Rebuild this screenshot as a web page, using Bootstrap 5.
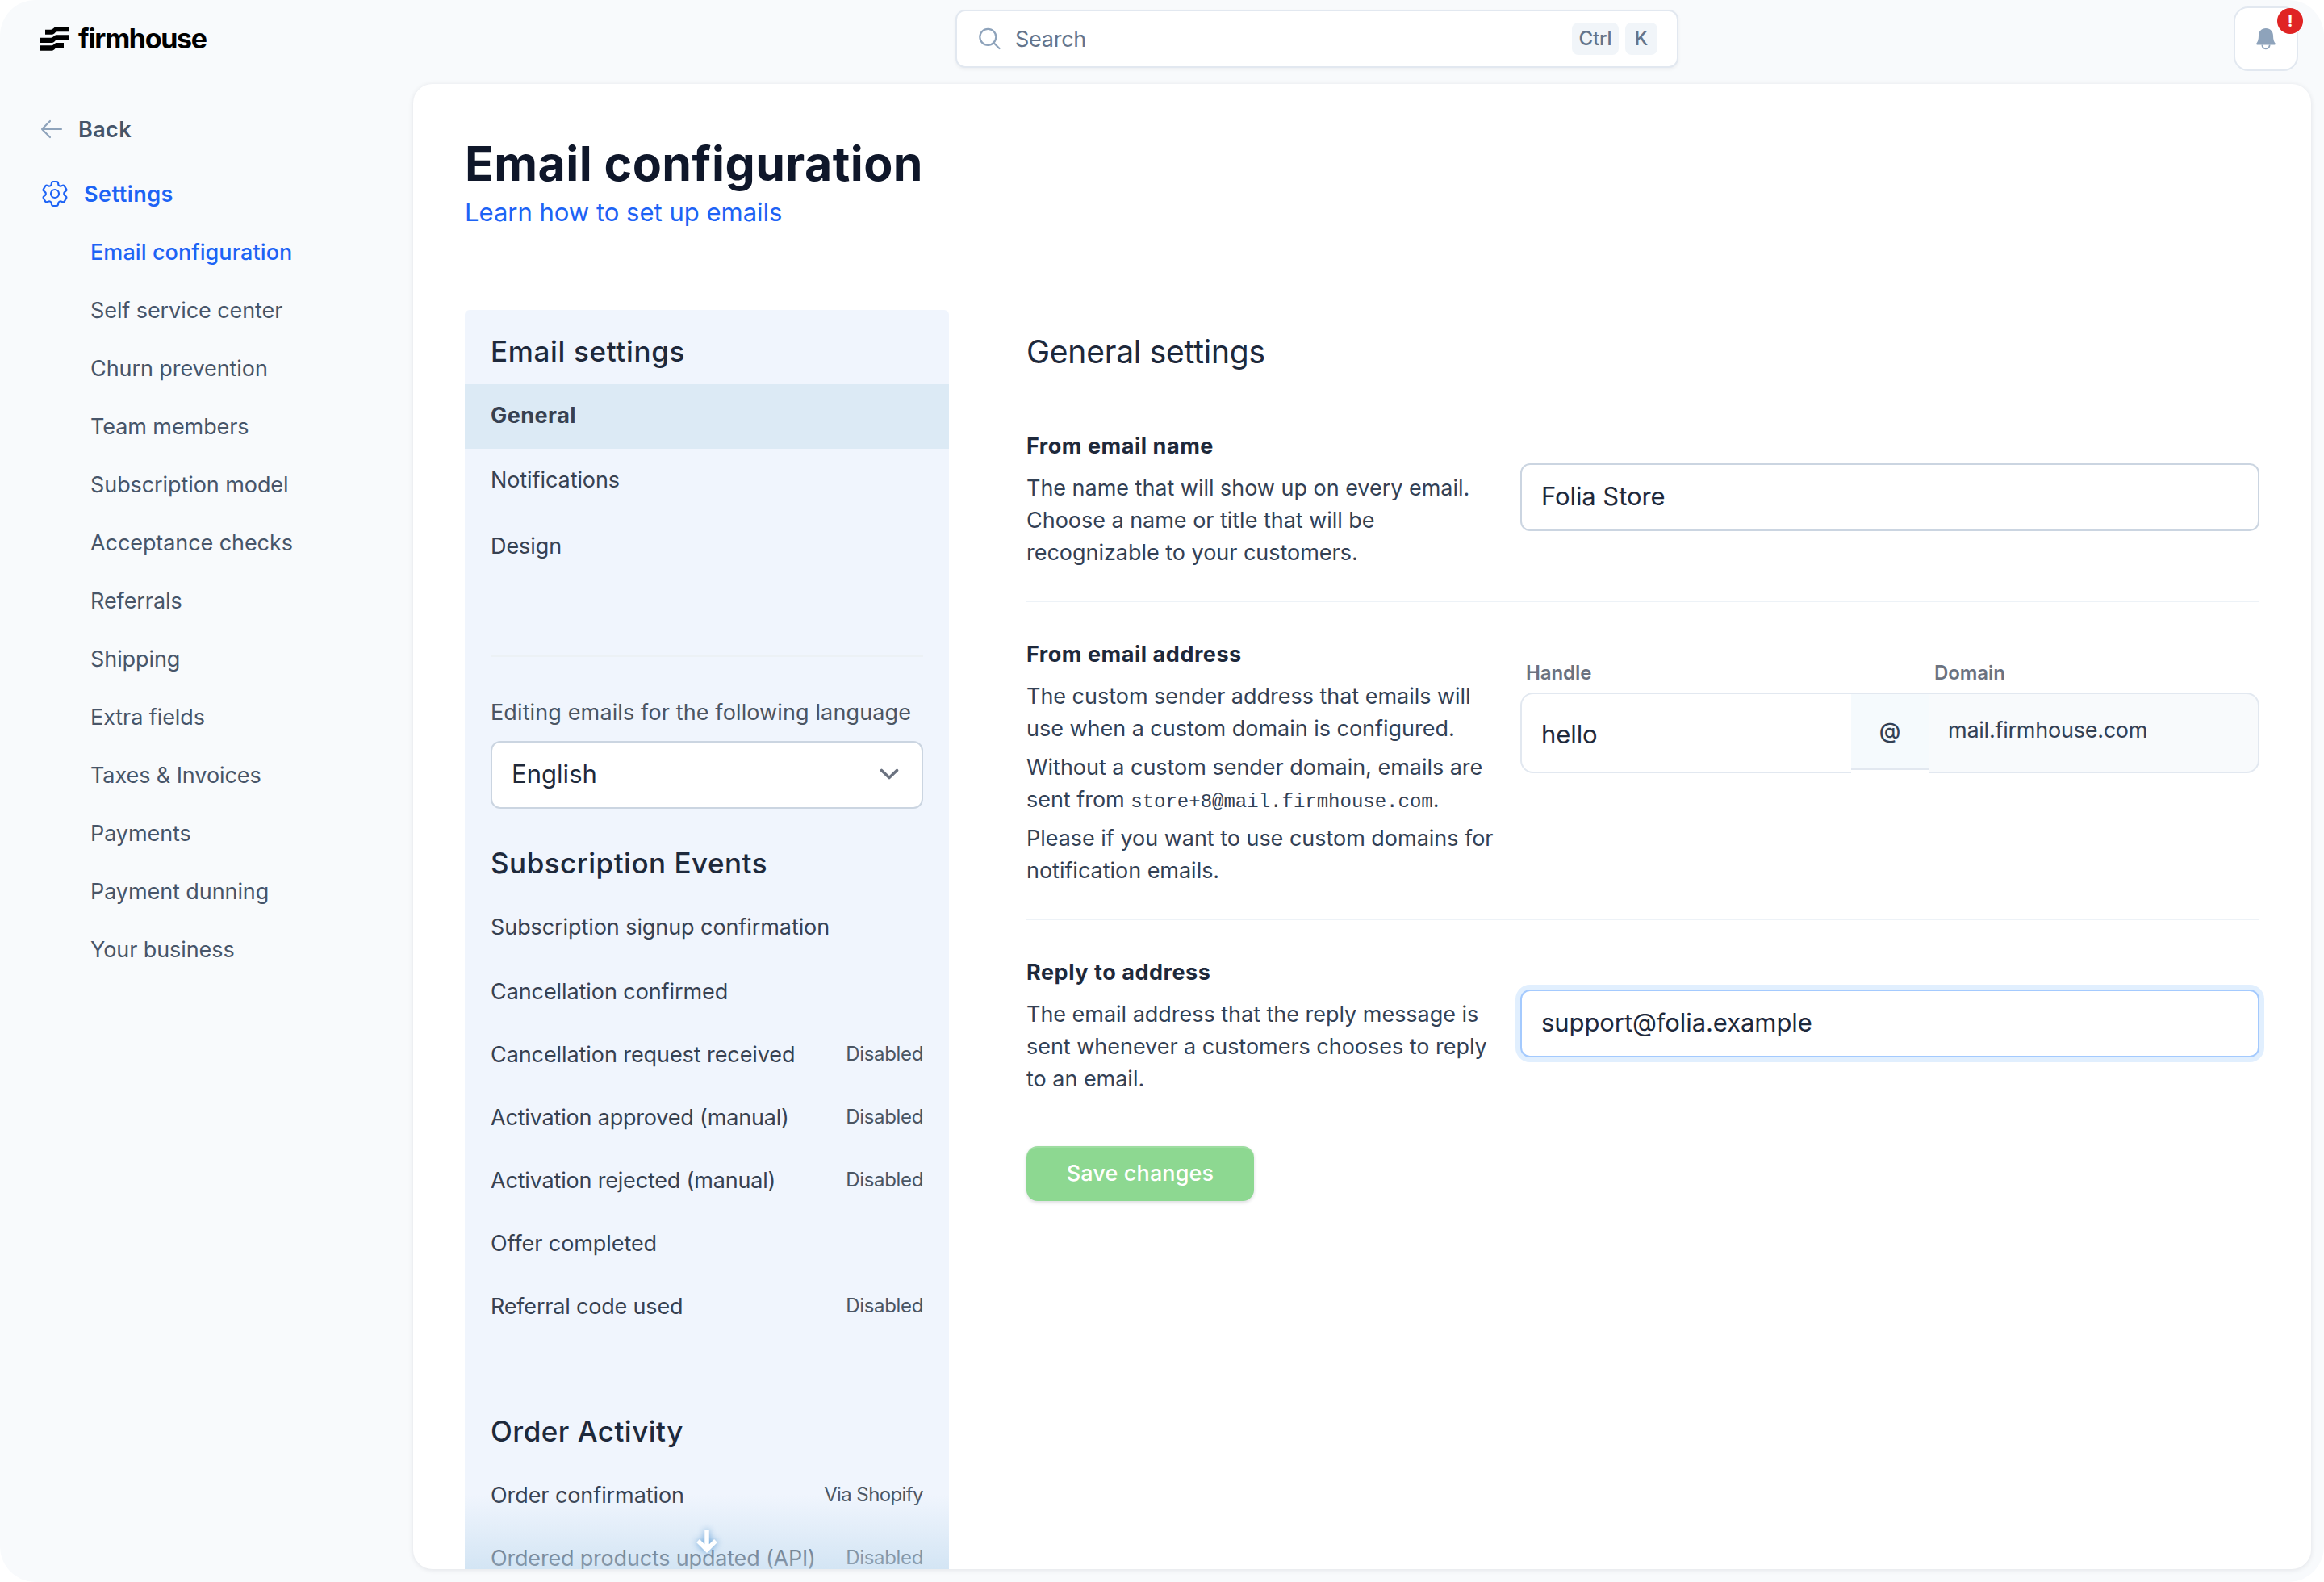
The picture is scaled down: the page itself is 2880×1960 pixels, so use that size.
<!DOCTYPE html>
<html lang="en">
<head>
<meta charset="utf-8">
<title>Email configuration</title>
<link href="https://cdn.jsdelivr.net/npm/bootstrap@5.3.0/dist/css/bootstrap.min.css" rel="stylesheet">
<style>
  body { background:#fff; font-family:Inter,"Liberation Sans",sans-serif; font-size:27px; line-height:40px; color:#334155; letter-spacing:-.003em; }
  a { text-decoration:none; color:inherit; }
  .app { width:2880px; height:1960px; background:#f8fafc; border-radius:44px; overflow:hidden; }
  .topbar { height:104px; }
  .brand { width:1184px; padding-left:49px; height:96px; color:#000; }
  .brand-name { font-size:34px; font-weight:700; margin-left:11px; line-height:40px; letter-spacing:-.039em; }
  .search-box { width:896px; height:72px; margin-top:12px; border:2px solid #e2e8f0; border-radius:12px; background:#fff; color:#64748b; padding:0 24px 0 27px; box-shadow:0 2px 4px rgba(15,23,42,.05); }
  .search-hint { margin-left:17px; padding-top:1px; letter-spacing:-.01em; }
  .key { width:40px; height:40px; line-height:40px; border-radius:8px; background:#f1f5f9; font-size:24px; font-weight:500; text-align:center; color:#64748b; }
  .key-wide { width:58px; }
  .bell { width:80px; height:80px; margin:8px 32px 0 auto; border:2px solid #e2e8f0; border-radius:18px; background:#fff; }
  .alert-dot { position:absolute; top:0; right:-8px; width:32px; height:32px; border-radius:50%; background:#e02424; color:#fff; font-size:20px; font-weight:700; line-height:32px; text-align:center; }
  .side { width:512px; padding-top:12px; color:#475569; }
  .side span { padding-top:2px; }
  .back-link { height:88px; padding-left:49px; gap:18px; font-weight:600; letter-spacing:.015em; }
  .top-link { height:72px; padding-left:48px; gap:16px; font-weight:600; color:#1d63f5; letter-spacing:.018em; }
  .sub-link { height:72px; padding-left:112px; }
  .sub-link.active { color:#1d63f5; font-weight:500; letter-spacing:.003em; }
  .sheet { width:2352px; height:1840px; border-radius:24px; background:#fff; padding:63px 64px 0; overflow:hidden; box-shadow:0 1px 6px rgba(15,23,42,.1); }
  h1 { font-size:59px; line-height:72px; font-weight:700; color:#0f172a; margin:0; letter-spacing:.0076em; }
  .learn { color:#1d63f5; font-size:31px; margin-top:4px; letter-spacing:0; }
  .columns { margin-top:101px; gap:96px; }
  .panel { width:600px; height:1560px; background:#f0f5fd; border-radius:6px 6px 0 0; overflow:hidden; color:#374151; }
  .panel-title { font-size:35px; line-height:48px; font-weight:500; color:#1e293b; margin:0; padding:0 32px; letter-spacing:.014em; }
  .title-first { margin:27px 0 17px; letter-spacing:.019em; }
  .title-events { margin:43px 0 15px; }
  .title-orders { margin:92px 0 16px; }
  .prow { height:78px; padding:2px 32px 0; }
  .prow.tall { height:80px; }
  .prow.mid { height:79px; }
  .prow.nudge { padding:0 32px 2px; }
  .prow.active { background:#dceaf5; font-weight:700; letter-spacing:.017em; }
  .prow.snug { letter-spacing:-.007em; }
  .tag { font-size:24px; color:#4b5563; padding-bottom:2px; letter-spacing:-.014em; }
  .tag.via { letter-spacing:-.025em; }
  .thin { height:2px; background:#edf2f7; }
  .panel .thin { margin:96px 32px 48px; background:#ecf1f5; }
  .form-area .thin { margin:40px 0 44px; }
  .lang-label { margin:0 0 0 32px; padding-top:1px; color:#4b5563; letter-spacing:.0045em; }
  .lang { margin:15px 32px 0; height:84px; border:2px solid #cbd5e1; border-radius:12px; background:#fff; color:#1e293b; font-size:31px; padding:0 28px 2px 24px; letter-spacing:.001em; }
  .fade-more { position:absolute; left:0; right:0; bottom:0; height:92px; background:linear-gradient(rgba(192,218,238,0),rgba(192,218,238,.6)); }
  .fade-more svg { margin:42px auto 0; overflow:visible; filter:drop-shadow(0 0 4px #5b9bd5); }
  .form-area { width:1528px; padding-top:24px; }
  .area-title { font-size:39px; line-height:56px; font-weight:400; color:#1e293b; margin:0 0 68px; letter-spacing:-.006em; }
  .txt { width:612px; padding-top:1px; margin-bottom:-1px; letter-spacing:-.001em; }
  .txt h3 { font-size:27px; line-height:40px; font-weight:700; color:#1e293b; margin:0 0 12px; letter-spacing:.02em; }
  .txt p { margin:0 0 8px; white-space:nowrap; }
  .txt p:last-child { margin-bottom:0; }
  .txt code { font-family:"Liberation Mono",monospace; font-size:24px; line-height:1; color:#334155; letter-spacing:0; }
  .drop-input { padding-top:42px; }
  .drop-labels { padding-top:28px; }
  .field { height:84px; border:2px solid #cbd5e1; border-radius:12px; padding:0 24px 2px; font-size:31px; color:#1e293b; background:#fff; }
  .focused { border-color:#a4cafe; box-shadow:0 0 0 6px #e1effe; }
  .field-label { font-size:24px; line-height:32px; font-weight:600; color:#6b7280; }
  .field-label span { padding-left:7px; }
  .field-label span:first-child { width:506px; }
  .seg { border:2px solid #e2e8f0; height:100px; }
  .seg-a { width:410px; border-right:0; border-radius:16px 0 0 16px; padding:4px 24px 0; font-size:31px; color:#1e293b; }
  .seg-b { width:96px; height:96px; border-width:2px 0; background:#f5fafd; font-weight:500; }
  .seg-c { width:410px; border-left:0; border-radius:0 16px 16px 0; background:#f8fafc; padding:0 24px 6px; letter-spacing:-.009em; }
  .save { margin-top:64px; width:282px; height:68px; border:0; border-radius:14px; background:#8dd891; color:#fff; font-size:27px; font-weight:500; line-height:40px; padding:0; letter-spacing:.005em; box-shadow:0 2px 4px rgba(15,23,42,.15), inset 0 2px 0 rgba(255,255,255,.15); }
  svg { display:block; flex:none; }
</style>
</head>
<body>
<div class="app">
  <header class="topbar d-flex align-items-start">
    <div class="brand d-flex align-items-center">
      <svg width="37" height="30" viewBox="0 0 111 90"><path d="M21 11H42C52 11 52 1 64 1H110V19H66C56 19 58 29 46 29H21ZM0 41H42C54 41 52 31 64 31H110V49H66C56 49 58 60 46 60H0ZM0 70H44C54 70 54 60 64 60H90V79H66C56 79 56 89 46 89H0Z"/></svg>
      <span class="brand-name">firmhouse</span>
    </div>
    <div class="search-box d-flex align-items-center">
      <svg width="28" height="28" viewBox="0 0 28 28" fill="none" stroke="#8ea3bb" stroke-width="2.200" stroke-linecap="round"><circle cx="11.300" cy="11.800" r="10"/><path d="M18.500 19L25.500 26"/></svg>
      <span class="search-hint">Search</span>
      <span class="key key-wide ms-auto">Ctrl</span><span class="key ms-2">K</span>
    </div>
    <div class="bell position-relative d-flex align-items-center justify-content-center">
      <svg width="24" height="27" viewBox="0 0 24 27"><path d="M12 0C6.500 0 3 4 3 9C3 14 2 16.500.3 18.800C0 19.800.4 20.500 1.200 20.500H22.800C23.600 20.500 24 19.800 23.700 18.800C22 16.500 21 14 21 9C21 4 17.500 0 12 0Z" fill="#8ea3bb"/><path d="M7.300 20.500C7.800 26.800 16.200 26.800 16.700 20.500" fill="none" stroke="#8ea3bb" stroke-width="1.800"/></svg>
      <span class="alert-dot">!</span>
    </div>
  </header>
  <div class="d-flex">
    <nav class="side">
      <a class="back-link d-flex align-items-center"><svg width="30" height="24" viewBox="0 0 30 24" fill="none" stroke="#8ea3bb" stroke-width="2.200" stroke-linecap="round" stroke-linejoin="round"><path d="M27 12H3M13 2L3 12L13 22"/></svg><span>Back</span></a>
      <a class="top-link d-flex align-items-center"><svg width="40" height="40" viewBox="0 0 24 24" fill="none" stroke="currentColor" stroke-width="1.300" stroke-linejoin="round"><path d="M9.594 3.940c.09-.542.56-.94 1.110-.94h2.593c.55 0 1.020.398 1.110.94l.213 1.281c.063.374.313.686.645.87.074.04.147.083.22.127.325.196.72.257 1.075.124l1.217-.456a1.125 1.125 0 0 1 1.370.49l1.296 2.247a1.125 1.125 0 0 1-.26 1.431l-1.003.827c-.293.241-.438.613-.43.992a7.723 7.723 0 0 1 0 .255c-.008.378.137.75.43.991l1.004.827c.424.35.534.955.26 1.430l-1.298 2.247a1.125 1.125 0 0 1-1.369.491l-1.217-.456c-.355-.133-.75-.072-1.076.124a6.470 6.470 0 0 1-.22.128c-.331.183-.581.495-.644.869l-.213 1.281c-.09.543-.56.94-1.110.94h-2.594c-.55 0-1.019-.398-1.110-.94l-.213-1.281c-.062-.374-.312-.686-.644-.87a6.520 6.520 0 0 1-.22-.127c-.325-.196-.72-.257-1.076-.124l-1.217.456a1.125 1.125 0 0 1-1.369-.49l-1.297-2.247a1.125 1.125 0 0 1 .26-1.431l1.004-.827c.292-.24.437-.613.43-.991a6.932 6.932 0 0 1 0-.255c.007-.38-.138-.751-.43-.992l-1.004-.827a1.125 1.125 0 0 1-.26-1.430l1.297-2.247a1.125 1.125 0 0 1 1.370-.491l1.216.456c.356.133.751.072 1.076-.124.072-.044.146-.086.22-.128.332-.183.582-.495.644-.869l.214-1.280Z"/><circle cx="12" cy="12" r="3"/></svg><span>Settings</span></a>
      <a class="sub-link active d-flex align-items-center"><span>Email configuration</span></a>
      <a class="sub-link d-flex align-items-center"><span>Self service center</span></a>
      <a class="sub-link d-flex align-items-center"><span>Churn prevention</span></a>
      <a class="sub-link d-flex align-items-center"><span>Team members</span></a>
      <a class="sub-link d-flex align-items-center"><span>Subscription model</span></a>
      <a class="sub-link d-flex align-items-center"><span>Acceptance checks</span></a>
      <a class="sub-link d-flex align-items-center"><span>Referrals</span></a>
      <a class="sub-link d-flex align-items-center"><span>Shipping</span></a>
      <a class="sub-link d-flex align-items-center"><span>Extra fields</span></a>
      <a class="sub-link d-flex align-items-center"><span>Taxes &amp; Invoices</span></a>
      <a class="sub-link d-flex align-items-center"><span>Payments</span></a>
      <a class="sub-link d-flex align-items-center"><span>Payment dunning</span></a>
      <a class="sub-link d-flex align-items-center"><span>Your business</span></a>
    </nav>
    <main class="sheet">
      <h1>Email configuration</h1>
      <div class="learn"><a>Learn how to set up emails</a></div>
      <div class="columns d-flex">
        <section class="panel position-relative">
          <h2 class="panel-title title-first">Email settings</h2>
          <div class="prow tall nudge active d-flex align-items-center">General</div>
          <div class="prow tall nudge d-flex align-items-center">Notifications</div>
          <div class="prow tall d-flex align-items-center">Design</div>
          <div class="thin"></div>
          <div class="lang-label">Editing emails for the following language</div>
          <div class="lang d-flex align-items-center justify-content-between">English<svg width="24" height="14" viewBox="0 0 24 14" fill="none" stroke="#6b7280" stroke-width="3.600" stroke-linecap="round" stroke-linejoin="round"><path d="M2.500 2.500L12 11.500L21.500 2.500"/></svg></div>
          <h2 class="panel-title title-events">Subscription Events</h2>
          <div class="prow tall d-flex align-items-center">Subscription signup confirmation</div>
          <div class="prow mid d-flex align-items-center">Cancellation confirmed</div>
          <div class="prow d-flex align-items-center justify-content-between">Cancellation request received<span class="tag">Disabled</span></div>
          <div class="prow snug d-flex align-items-center justify-content-between">Activation approved (manual)<span class="tag">Disabled</span></div>
          <div class="prow snug d-flex align-items-center justify-content-between">Activation rejected (manual)<span class="tag">Disabled</span></div>
          <div class="prow d-flex align-items-center">Offer completed</div>
          <div class="prow snug d-flex align-items-center justify-content-between">Referral code used<span class="tag">Disabled</span></div>
          <h2 class="panel-title title-orders">Order Activity</h2>
          <div class="prow d-flex align-items-center justify-content-between">Order confirmation<span class="tag via">Via Shopify</span></div>
          <div class="prow snug d-flex align-items-center justify-content-between">Ordered products updated (API)<span class="tag">Disabled</span></div>
          <div class="fade-more"><svg width="28" height="32" viewBox="0 0 28 32" fill="none" stroke="#fff" stroke-width="5.500"><path d="M14 2V27M3 15L14 26L25 15"/></svg></div>
        </section>
        <section class="form-area">
          <h2 class="area-title">General settings</h2>
          <div class="d-flex">
            <div class="txt"><h3>From email name</h3><p>The name that will show up on every email.<br>Choose a name or title that will be<br>recognizable to your customers.</p></div>
            <div class="flex-grow-1 drop-input"><div class="field d-flex align-items-center">Folia Store</div></div>
          </div>
          <div class="thin"></div>
          <div class="d-flex">
            <div class="txt"><h3>From email address</h3><p>The custom sender address that emails will<br>use when a custom domain is configured.</p><p>Without a custom sender domain, emails are<br>sent from <code>store+8@mail.firmhouse.com</code>.</p><p>Please if you want to use custom domains for<br>notification emails.</p></div>
            <div class="flex-grow-1 drop-labels">
              <div class="d-flex field-label"><span>Handle</span><span>Domain</span></div>
              <div class="d-flex mt-2"><div class="seg seg-a d-flex align-items-center">hello</div><div class="seg seg-b d-flex align-items-center justify-content-center">@</div><div class="seg seg-c d-flex align-items-center">mail.firmhouse.com</div></div>
            </div>
          </div>
          <div class="thin"></div>
          <div class="d-flex">
            <div class="txt"><h3>Reply to address</h3><p>The email address that the reply message is<br>sent whenever a customers chooses to reply<br>to an email.</p></div>
            <div class="flex-grow-1 drop-input"><div class="field focused d-flex align-items-center">support@folia.example</div></div>
          </div>
          <button class="btn save">Save changes</button>
        </section>
      </div>
    </main>
  </div>
</div>
<script src="https://cdn.jsdelivr.net/npm/bootstrap@5.3.0/dist/js/bootstrap.bundle.min.js"></script>
</body>
</html>
